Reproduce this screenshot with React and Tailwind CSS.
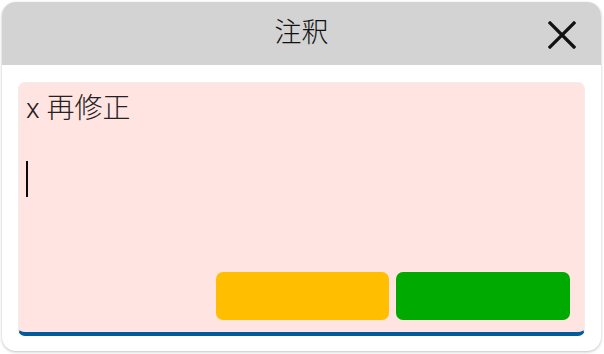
import React from 'react';

const App = () => {
  return (
    <div className="w-[604px] h-[354px] bg-white p-[2px]" style={{ fontFamily: 'Roboto, "Noto Sans CJK JP", sans-serif' }}>
      <div className="w-[599px] h-[349px] rounded-[14px] bg-white shadow-[0_1px_3px_rgba(0,0,0,0.25)] overflow-hidden flex flex-col">
        {/* Header */}
        <div className="h-[63px] bg-[#d3d3d3] relative flex items-center justify-center">
          <span className="text-[27px] font-light text-[#111] leading-none">注釈</span>
          <button className="absolute right-[24px] top-[18px] w-[30px] h-[30px] flex items-center justify-center">
            <svg width="28" height="28" viewBox="0 0 28 28">
              <path d="M2 2 L26 26 M26 2 L2 26" stroke="#111" strokeWidth="3.2" strokeLinecap="square" />
            </svg>
          </button>
        </div>

        {/* Body */}
        <div className="flex-1 px-[16px] pt-[17px]">
          <div className="h-[254px] rounded-[7px] bg-[#ffe4e1] border border-[#eeeeee] border-b-[4px] border-b-[#005a9c] flex flex-col px-[7px]">
            <p className="mt-[8px] text-[28px] font-light leading-[36px] text-[#222]">x 再修正</p>
            <div className="mt-[34px] w-[2px] h-[36px] bg-[#0a0a0a]" />
            <div className="mt-auto mb-[12px] flex justify-end gap-[7px] pr-[7px]">
              <button className="w-[173px] h-[48px] rounded-[7px] bg-[#ffbf00]" />
              <button className="w-[174px] h-[48px] rounded-[7px] bg-[#00aa00]" />
            </div>
          </div>
        </div>
      </div>
    </div>
  );
};

export default App;
